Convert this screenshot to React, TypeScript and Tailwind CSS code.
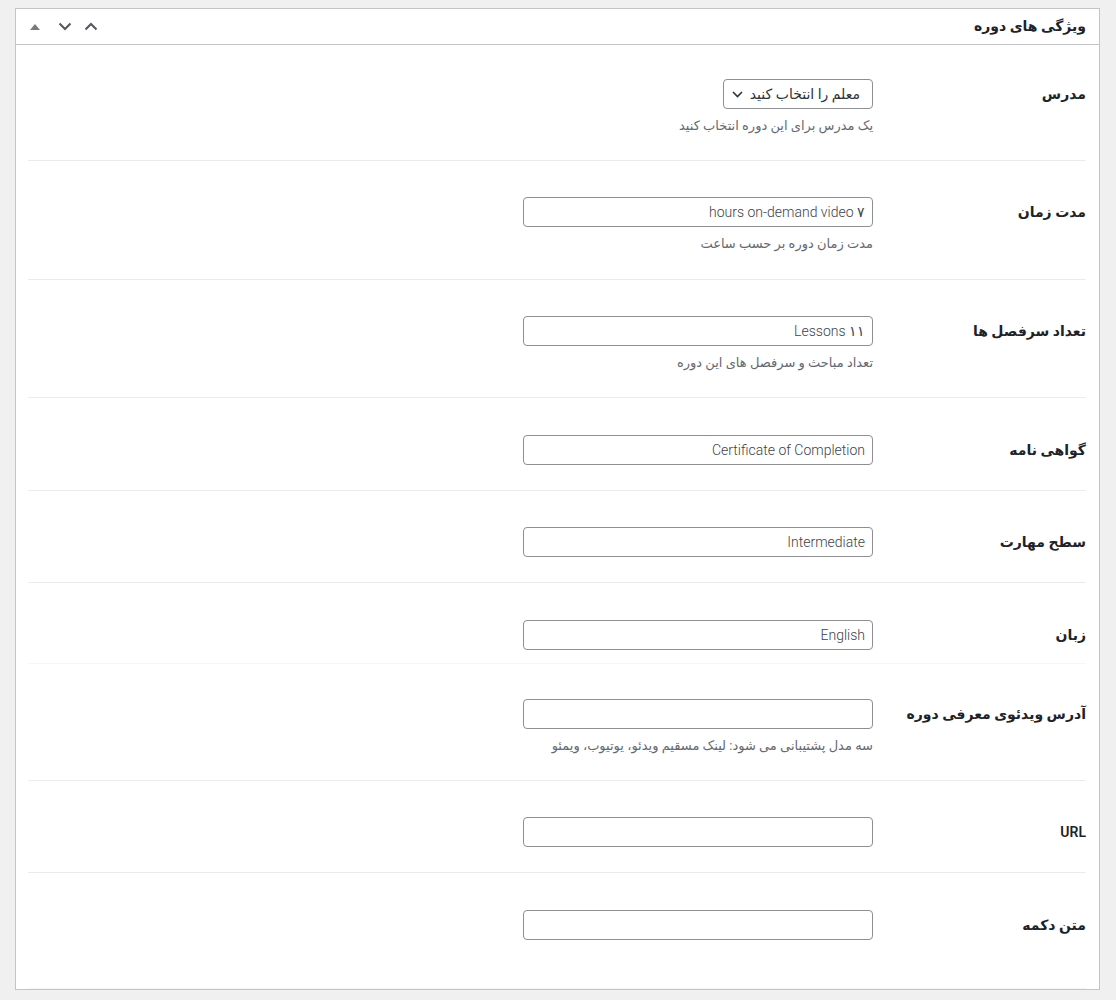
import React from 'react';

/**
 * Field row of the course meta box
 */
interface FieldRow {
  label: string;
  value?: string;
  help?: string;
  kind?: 'select' | 'input';
  pad: string;
  border?: boolean;
}

const rows: FieldRow[] = [
  {
    label: 'مدرس',
    kind: 'select',
    value: 'معلم را انتخاب کنید',
    help: 'یک مدرس برای این دوره انتخاب کنید',
    pad: 'pt-[34px] pb-[25px]',
    border: true,
  },
  {
    label: 'مدت زمان',
    value: '۷ hours on-demand video',
    help: 'مدت زمان دوره بر حسب ساعت',
    pad: 'pt-[36px] pb-[26px]',
    border: true,
  },
  {
    label: 'تعداد سرفصل ها',
    value: '۱۱ Lessons',
    help: 'تعداد مباحث و سرفصل های این دوره',
    pad: 'pt-[36px] pb-[25px]',
    border: true,
  },
  {
    label: 'گواهی نامه',
    value: 'Certificate of Completion',
    pad: 'pt-[37px] pb-[25px]',
    border: true,
  },
  {
    label: 'سطح مهارت',
    value: 'Intermediate',
    pad: 'pt-[36px] pb-[25px]',
    border: true,
  },
  {
    label: 'زبان',
    value: 'English',
    pad: 'pt-[37px] pb-[13px]',
  },
  {
    label: 'آدرس ویدئوی معرفی دوره',
    value: '',
    help: 'سه مدل پشتیبانی می شود: لینک مسقیم ویدئو، یوتیوب، ویمئو',
    pad: 'pt-[35px] pb-[25px]',
    border: true,
  },
  {
    label: 'URL',
    value: '',
    pad: 'pt-[36px] pb-[25px]',
    border: true,
  },
  {
    label: 'متن دکمه',
    value: '',
    pad: 'pt-[37px] pb-[48px]',
  },
];

const ChevronUp = () => (
  <svg width="14" height="9" viewBox="0 0 14 9" fill="none">
    <path d="M1.5 7.5L7 2L12.5 7.5" stroke="#50575e" strokeWidth="2" />
  </svg>
);

const ChevronDown = () => (
  <svg width="14" height="9" viewBox="0 0 14 9" fill="none">
    <path d="M1.5 1.5L7 7L12.5 1.5" stroke="#50575e" strokeWidth="2" />
  </svg>
);

const Field: React.FC<{ row: FieldRow }> = ({ row }) => (
  <div
    className={`flex ${row.pad} ${
      row.border ? 'border-b border-[#ebebeb]' : 'border-b border-[#f6f6f6]'
    }`}
  >
    <div className="w-[213px] h-[30px] flex items-center text-[14px] font-semibold text-[#1d2327]">
      {row.label}
    </div>
    <div className="flex flex-col items-start">
      {row.kind === 'select' ? (
        <div className="relative">
          <select
            defaultValue=""
            className="appearance-none h-[30px] w-[150px] border border-[#8c8f94] rounded-[4px] bg-white pr-[12px] pl-[24px] text-[14px] text-[#2c3338] outline-none"
          >
            <option value="">{row.value}</option>
          </select>
          <svg
            className="absolute left-[9px] top-[12px] pointer-events-none"
            width="11"
            height="7"
            viewBox="0 0 11 7"
            fill="none"
          >
            <path d="M1 1L5.5 5.5L10 1" stroke="#2c3338" strokeWidth="1.6" />
          </svg>
        </div>
      ) : (
        <input
          type="text"
          defaultValue={row.value}
          className="h-[30px] w-[350px] border border-[#8c8f94] rounded-[4px] bg-white px-[7px] text-[14px] font-light text-[#3c434a] outline-none"
        />
      )}
      {row.help && (
        <p className="mt-[7px] text-[13px] leading-[19px] text-[#646970]">
          {row.help}
        </p>
      )}
    </div>
  </div>
);

export default function App() {
  return (
    <div className="min-h-[1000px] bg-[#f0f0f1] pt-[8px] pb-[10px] font-['Roboto','DejaVu_Sans',sans-serif]">
      <div className="ml-[15px] mr-[16px] bg-white border border-[#c3c4c7]">
        <div dir="rtl" className="h-[36px] flex items-center justify-between border-b border-[#c3c4c7] pr-[13px]">
          <h2 className="text-[14px] font-bold text-[#1d2327]">ویژگی های دوره</h2>
          <div dir="ltr" className="flex items-center ml-[13px] order-last">
            <svg width="10" height="6" viewBox="0 0 10 6" className="mx-[1px]">
              <path d="M5 0L10 6H0Z" fill="#787c82" />
            </svg>
            <span className="ml-[17px]">
              <ChevronDown />
            </span>
            <span className="ml-[12px]">
              <ChevronUp />
            </span>
          </div>
        </div>
        <div dir="rtl" className="pr-[13px] pl-[12px]">
          {rows.map((row) => (
            <Field key={row.label} row={row} />
          ))}
        </div>
      </div>
    </div>
  );
}
